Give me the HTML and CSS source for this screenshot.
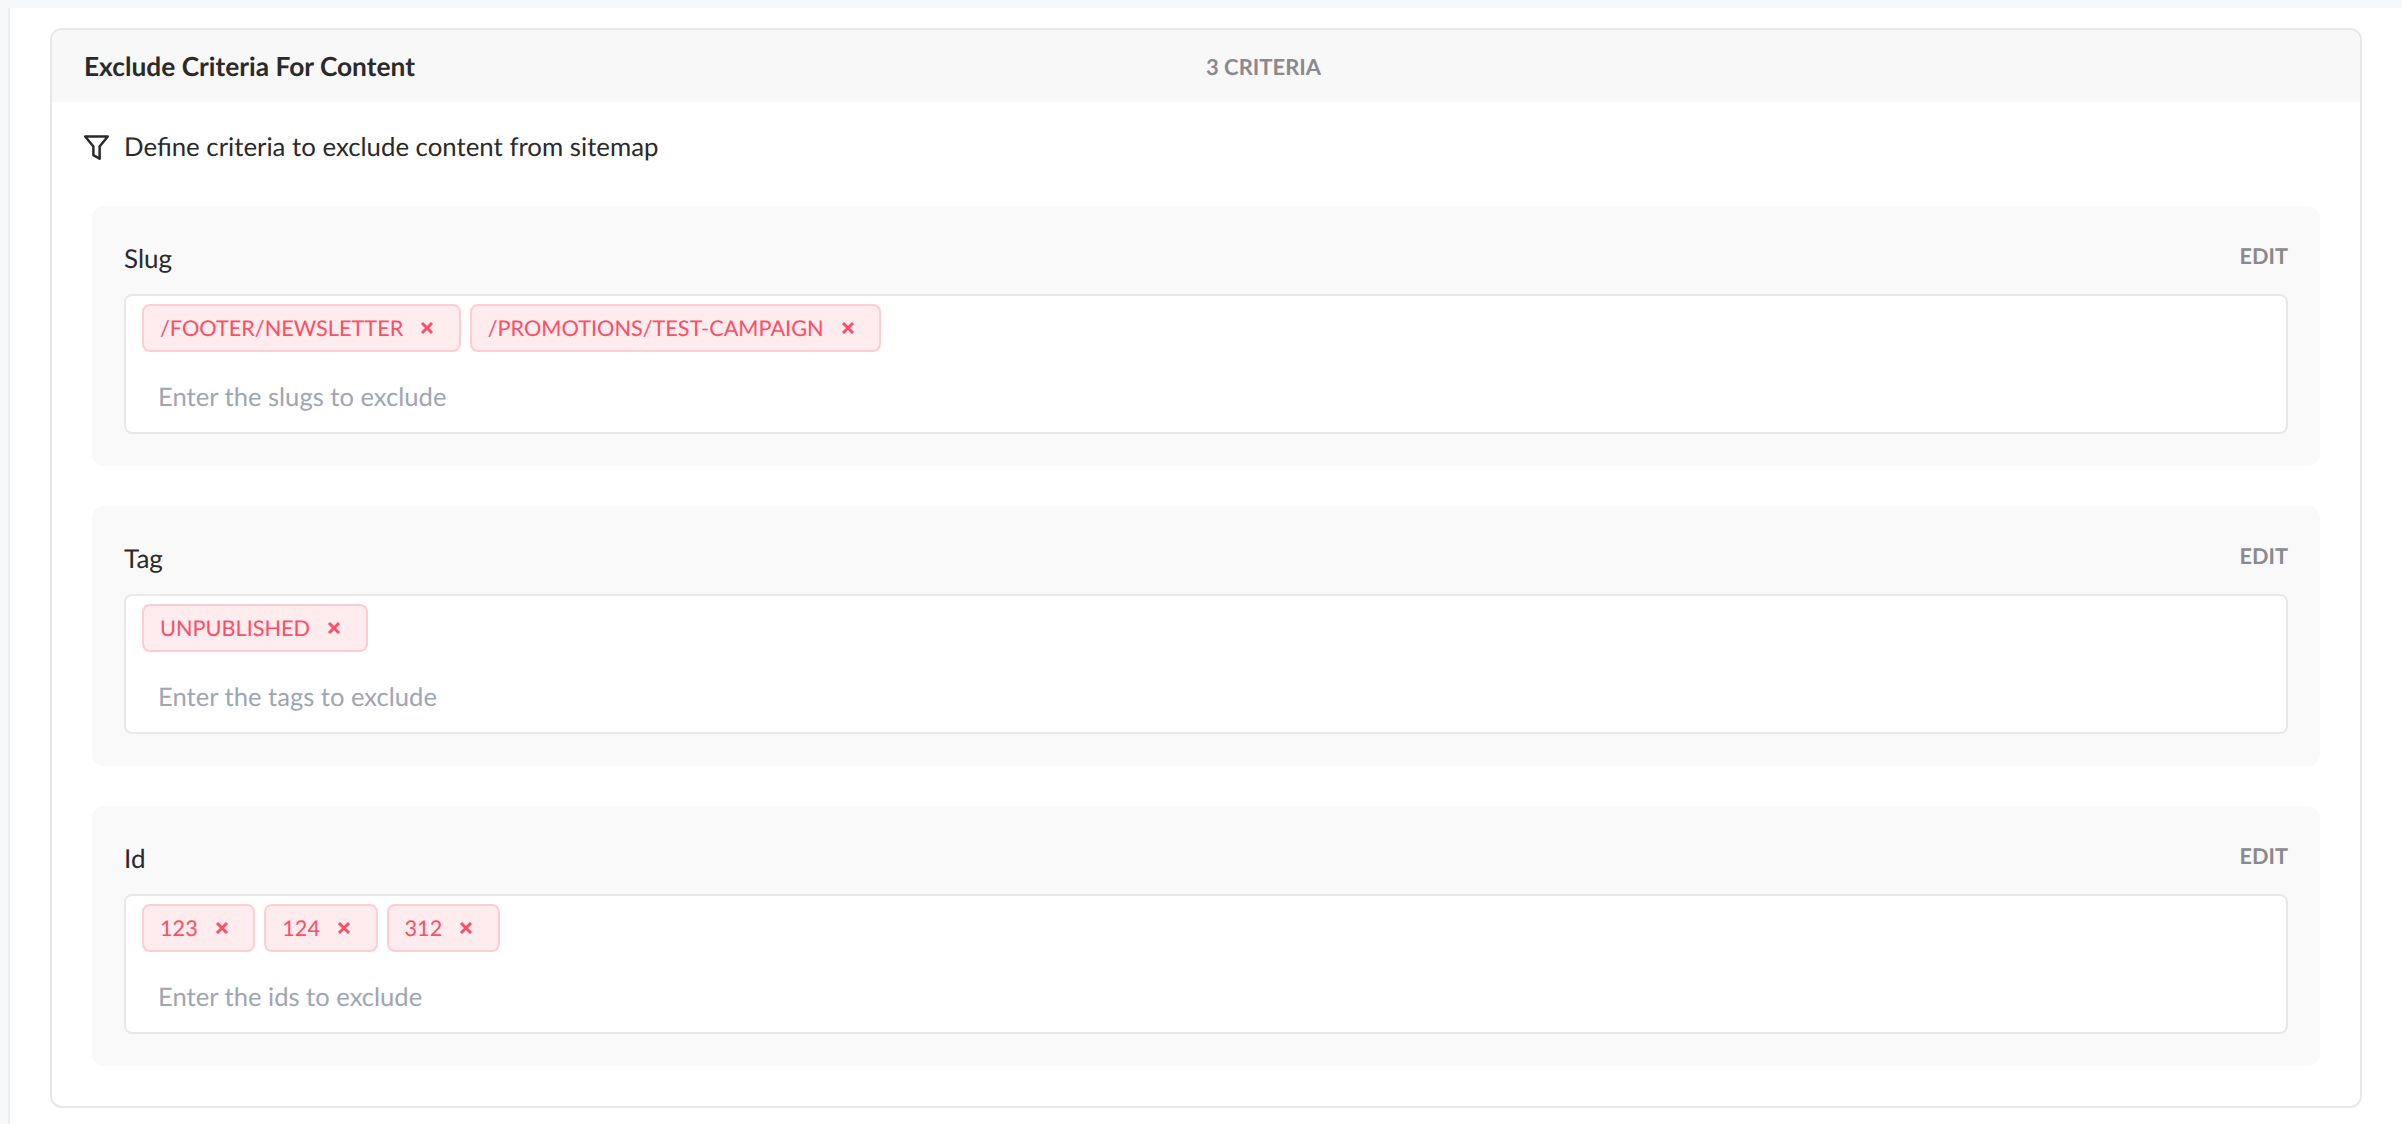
FILE: index.html
```html
<!DOCTYPE html>
<html lang="en">
<head>
<meta charset="utf-8">
<title>Exclude Criteria For Content</title>
<link rel="stylesheet" href="styles.css">
</head>
<body>
<main class="page">
  <section class="card">
    <header class="card-head">
      <h2 class="card-title">Exclude Criteria For Content</h2>
      <span class="card-count">3 CRITERIA</span>
    </header>
    <div class="card-body">
      <p class="intro">
        <svg class="funnel" viewBox="0 0 24 24" aria-hidden="true"><path d="M1.2 1.5H22.8L15 11V22.8L9 19.3V11Z"/></svg>
        <span>Define criteria to exclude content from sitemap</span>
      </p>

      <div class="block">
        <div class="block-head"><span class="block-label">Slug</span><span class="block-edit">EDIT</span></div>
        <div class="field">
          <div class="chips">
            <span class="chip">/FOOTER/NEWSLETTER<svg class="chip-x" viewBox="0 0 14 14" aria-hidden="true"><path d="M2 2L12 12M12 2L2 12"/></svg></span>
            <span class="chip">/PROMOTIONS/TEST-CAMPAIGN<svg class="chip-x" viewBox="0 0 14 14" aria-hidden="true"><path d="M2 2L12 12M12 2L2 12"/></svg></span>
          </div>
          <div class="placeholder">Enter the slugs to exclude</div>
        </div>
      </div>

      <div class="block">
        <div class="block-head"><span class="block-label">Tag</span><span class="block-edit">EDIT</span></div>
        <div class="field">
          <div class="chips">
            <span class="chip">UNPUBLISHED<svg class="chip-x" viewBox="0 0 14 14" aria-hidden="true"><path d="M2 2L12 12M12 2L2 12"/></svg></span>
          </div>
          <div class="placeholder">Enter the tags to exclude</div>
        </div>
      </div>

      <div class="block">
        <div class="block-head"><span class="block-label">Id</span><span class="block-edit">EDIT</span></div>
        <div class="field">
          <div class="chips">
            <span class="chip">123<svg class="chip-x" viewBox="0 0 14 14" aria-hidden="true"><path d="M2 2L12 12M12 2L2 12"/></svg></span>
            <span class="chip">124<svg class="chip-x" viewBox="0 0 14 14" aria-hidden="true"><path d="M2 2L12 12M12 2L2 12"/></svg></span>
            <span class="chip">312<svg class="chip-x" viewBox="0 0 14 14" aria-hidden="true"><path d="M2 2L12 12M12 2L2 12"/></svg></span>
          </div>
          <div class="placeholder">Enter the ids to exclude</div>
        </div>
      </div>
    </div>
  </section>
</main>
</body>
</html>
```

FILE: styles.css
```css
* { box-sizing: border-box; }
html, body { margin: 0; height: 100%; }
body {
  padding: 8px 0 0 8px;
  background: #f7f8fa;
  font-family: Lato, "Liberation Sans", sans-serif;
  text-rendering: geometricPrecision;
  color: #222;
  overflow: hidden;
}
.page {
  height: 1116px;
  padding: 20px 40px 0 40px;
  background: #fff;
  border-left: 2px solid #ecedef;
}
.card {
  width: 2312px;
  height: 1080px;
  border: 2px solid #e8e8e8;
  border-radius: 12px;
  overflow: hidden;
}
.card-head {
  display: grid;
  grid-template-columns: 1122px auto;
  align-items: center;
  height: 72px;
  padding-left: 32px;
  background: #f8f8f8;
}
.card-title {
  margin: 0;
  font-size: 26.3px;
  font-weight: 700;
  color: #2a2a2a;
}
.card-count {
  font-size: 22px;
  font-weight: 700;
  color: #8a8a8e;
}
.card-body { padding: 0 40px 0 40px; }
.intro {
  display: flex;
  align-items: center;
  gap: 15px;
  height: 104px;
  margin: 0 0 0 -8px;
  padding-bottom: 26px;
  padding-top: 12px;
  font-size: 25.8px;
  color: #2a2a2a;
}
.funnel {
  width: 25px;
  height: 25px;
  fill: none;
  stroke: #2a2a2a;
  stroke-width: 2.4;
  stroke-linejoin: round;
}
.block {
  height: 260px;
  margin-bottom: 40px;
  padding: 0 32px;
  background: #f9f9f9;
  border-radius: 12px;
}
.block-head {
  display: flex;
  justify-content: space-between;
  align-items: flex-start;
  height: 88px;
  padding-top: 32px;
}
.block-label {
  font-size: 26px;
  line-height: 40px;
  color: #2a2a2a;
}
.block-edit {
  font-size: 21.7px;
  line-height: 36px;
  font-weight: 700;
  color: #8a8a8e;
}
.field {
  height: 140px;
  padding: 8px 16px;
  background: #fff;
  border: 2px solid #e8e8e8;
  border-radius: 8px;
}
.chips {
  display: flex;
  gap: 9px;
}
.chip {
  display: inline-flex;
  align-items: center;
  gap: 17px;
  height: 48px;
  padding: 0 24.5px 0 16px;
  background: #ffecef;
  border: 2px solid #ffccd2;
  border-radius: 8px;
  font-size: 21.7px;
  color: #ff4d64;
}
.chip-x {
  width: 14px;
  height: 14px;
  fill: none;
  stroke: #ff4d64;
  stroke-width: 3;
}
.placeholder {
  padding: 20px 0 0 16px;
  font-size: 25.6px;
  line-height: 50px;
  color: #9fa5b4;
}
```
